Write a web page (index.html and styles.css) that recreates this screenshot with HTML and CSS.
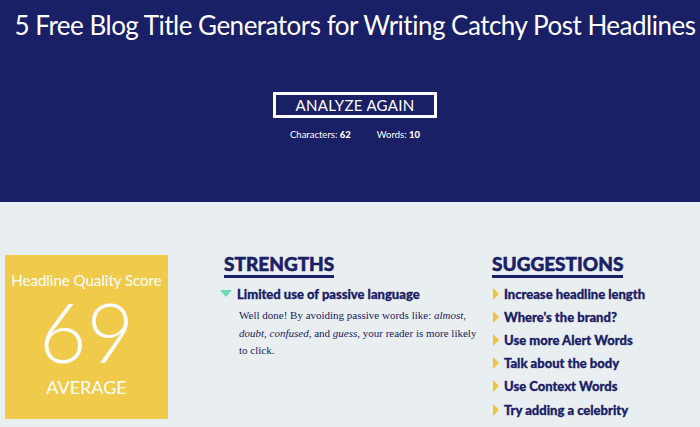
FILE: index.html
```html
<!DOCTYPE html>
<html lang="en">

<head>
    <meta charset="UTF-8">
    <meta name="viewport" content="width=device-width, initial-scale=1.0">
    <title>Headline Analyzer</title>
    <link rel="stylesheet" href="styles.css">
</head>

<body>
    <!-- header -->
    <div class="hero">
        <h1 class="headline">5 Free Blog Title Generators for Writing Catchy Post Headlines</h1>
        <button class="again-button">ANALYZE AGAIN</button>
        <div class="counts">
            <span>Characters: <b>62</b></span>
            <span>Words: <b>10</b></span>
        </div>
    </div>

    <!-- results -->
    <div class="results">
        <div class="score-box">
            <div class="score-label">Headline Quality Score</div>
            <div class="score-number">69</div>
            <div class="score-grade">AVERAGE</div>
        </div>

        <div class="column strengths">
            <h2>STRENGTHS</h2>
            <div class="strength-item">
                <span class="tri-down"></span>
                <div>
                    <div class="item-title">Limited use of passive language</div>
                    <p class="item-text">Well done! By avoiding passive words like: <i>almost</i>, <i>doubt</i>, <i>confused</i>, and <i>guess</i>, your reader is more likely to click.</p>
                </div>
            </div>
        </div>

        <div class="column suggestions">
            <h2>SUGGESTIONS</h2>
            <ul class="suggest-list">
                <li><span class="tri-right"></span>Increase headline length</li>
                <li><span class="tri-right"></span>Where's the brand?</li>
                <li><span class="tri-right"></span>Use more Alert Words</li>
                <li><span class="tri-right"></span>Talk about the body</li>
                <li><span class="tri-right"></span>Use Context Words</li>
                <li><span class="tri-right"></span>Try adding a celebrity</li>
            </ul>
        </div>
    </div>
</body>

</html>
```

FILE: styles.css
```css
body {
    margin: 0;
    padding: 0;
    font-family: Lato, "Open Sans", sans-serif;
    background: #e9eff0;
    overflow: hidden;
}

.hero {
    background: #1a2066;
    color: #fff;
    height: 202px;
    display: flex;
    flex-direction: column;
    align-items: center;
    box-sizing: border-box;
    padding: 7px 0 0 10px;
}

.headline {
    margin: 0;
    font-weight: 400;
    font-size: 26px;
    letter-spacing: -0.5px;
    line-height: 36px;
    white-space: nowrap;
}

.again-button {
    margin-top: 49px;
    width: 164px;
    height: 26px;
    background: transparent;
    border: 3px solid #fff;
    color: #fff;
    font-family: Lato, sans-serif;
    font-size: 15px;
    letter-spacing: 0.3px;
    padding: 0;
}

.counts {
    margin-top: 11px;
    font-size: 9.5px;
    display: flex;
    gap: 26px;
}

.counts b {
    font-weight: 900;
}

.results {
    display: flex;
    padding: 52px 0 0 5px;
    color: #1a2066;
}

.score-box {
    width: 163px;
    height: 164px;
    margin-top: 1px;
    background: #f0ca4a;
    color: #fff;
    text-align: center;
    box-sizing: border-box;
    padding-top: 16px;
}

.score-label {
    font-size: 15px;
}

.score-number {
    font-size: 82px;
    line-height: 84px;
    font-weight: 300;
}

.score-grade {
    font-size: 18px;
    margin-top: 3px;
}

.column h2 {
    margin: 0;
    display: inline-block;
    font-size: 19px;
    font-weight: 900;
    line-height: 20px;
    padding-bottom: 1px;
    border-bottom: 3px solid #1a2066;
    -webkit-text-stroke: 0.5px #1a2066;
}

.strengths {
    margin-left: 56px;
    width: 262px;
}

.suggestions {
    margin-left: 6px;
}

.strength-item {
    display: flex;
    margin-top: 8px;
    margin-left: -4px;
}

.tri-down {
    flex: none;
    width: 0;
    height: 0;
    margin: 4px 5px 0 0;
    border-left: 6px solid transparent;
    border-right: 6px solid transparent;
    border-top: 7px solid #6dd9b9;
}

.item-title {
    font-size: 13px;
    font-weight: 900;
    line-height: 16px;
    -webkit-text-stroke: 0.3px #1a2066;
}

.item-text {
    margin: 5px 0 0 2px;
    font-family: "Liberation Serif", serif;
    font-size: 11px;
    line-height: 17.5px;
}

.suggest-list {
    list-style: none;
    margin: 4px 0 0;
    padding: 0;
}

.suggest-list li {
    display: flex;
    align-items: center;
    font-size: 13px;
    font-weight: 900;
    height: 23.2px;
    -webkit-text-stroke: 0.3px #1a2066;
}

.tri-right {
    width: 0;
    height: 0;
    margin: 0 5px 0 1px;
    border-top: 6px solid transparent;
    border-bottom: 6px solid transparent;
    border-left: 6px solid #f0c43a;
}
```
